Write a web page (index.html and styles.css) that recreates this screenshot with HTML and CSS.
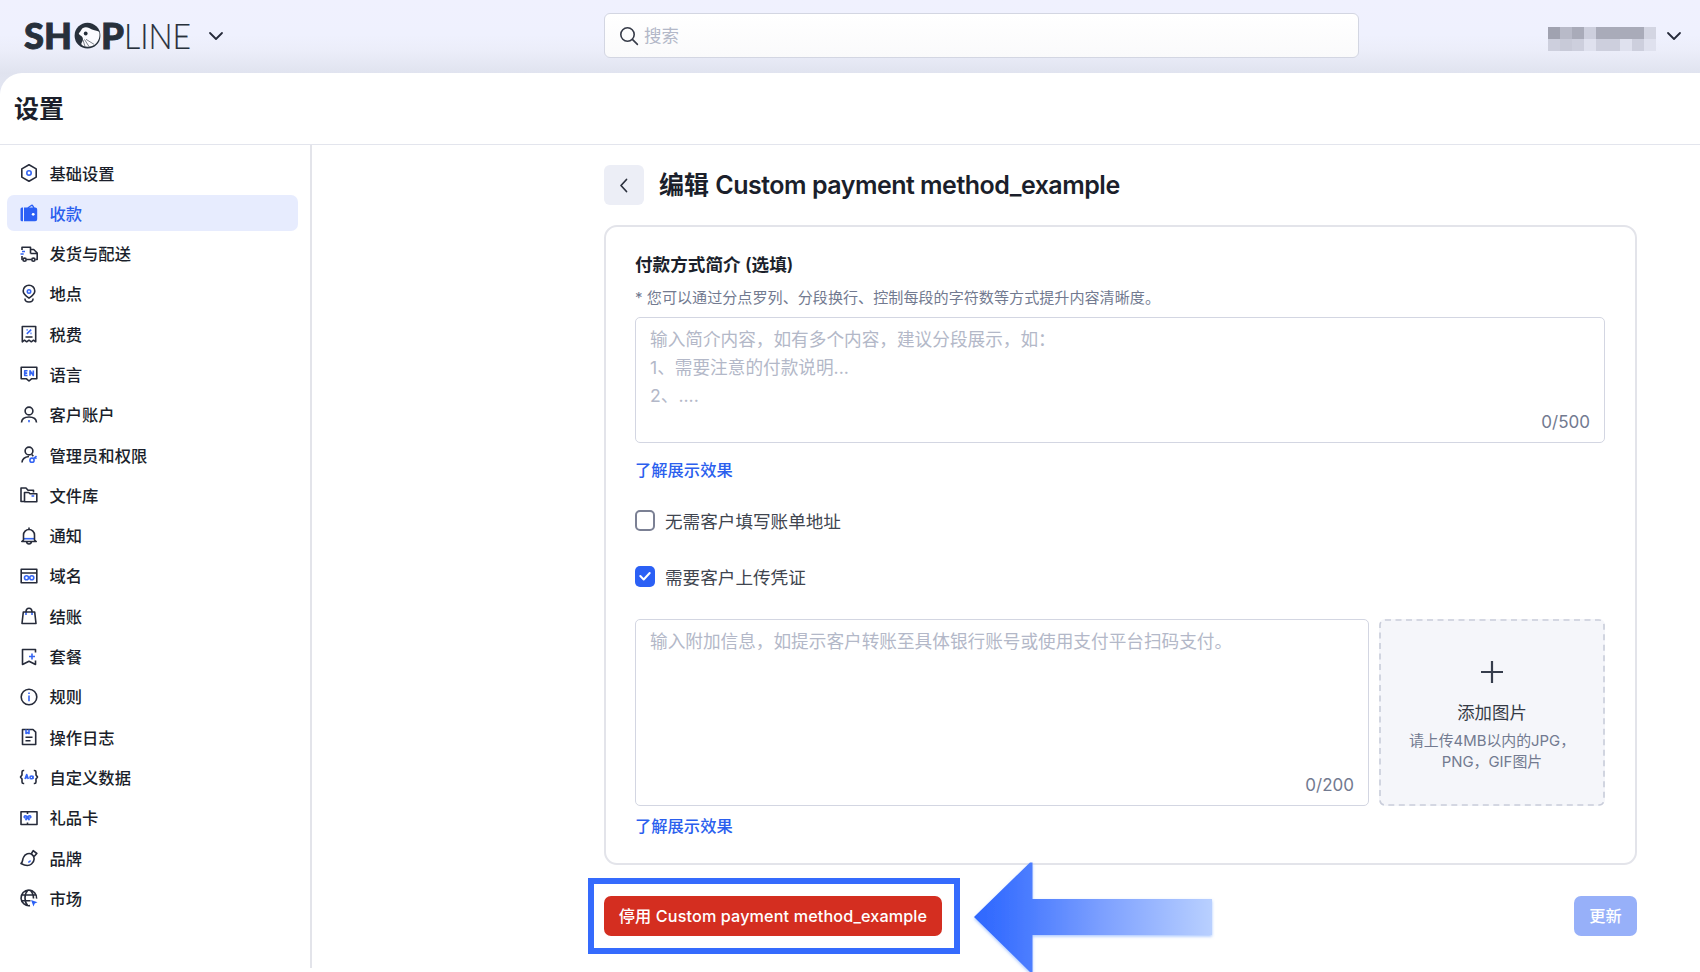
FILE: index.html
```html
<!DOCTYPE html>
<html lang="zh-CN">
<head>
<meta charset="utf-8">
<title>设置 - SHOPLINE</title>
<link rel="stylesheet" href="styles.css">
</head>
<body>
<header class="topbar">
  <div class="brand">
    <svg class="logo" width="172" height="52" viewBox="0 -10 172 52">
      <g class="logo-bold">
        <text x="0" y="29" textLength="48" lengthAdjust="spacingAndGlyphs">SH</text>
        <text x="77" y="29" textLength="23" lengthAdjust="spacingAndGlyphs">P</text>
      </g>
      <circle cx="63.500" cy="15.700" r="12.900" fill="#27303b"/>
      <path d="M58.500 8.200c4-2.200 6.500-.2 9.500 1.300 3.500 1.300 6 1.500 7.200 2.500 1 4-.2 8.500-3.200 11.500-3.500 3.200-8.500 4.200-12.500 2.500-1.800-.8-2.500-1.800-2-3 2.500-3.500 1.500-6-1-7.500-1.500-1-2-2-1.500-2.500 1.500-1.500 2-3 3.500-4.800z" fill="#fbfbff"/>
      <circle cx="61.700" cy="13.500" r="1.900" fill="#27303b"/>
      <path d="M60.500 19.500l4.500 7M62 19.300l8 5M59 20l2 6.500" stroke="#27303b" stroke-width=".6"/>
      <text class="logo-light" x="100" y="29" textLength="67" lengthAdjust="spacingAndGlyphs">LINE</text>
    </svg>
    <svg class="chevron" width="16" height="16" viewBox="0 0 16 16"><path d="M2 5l6 6 6-6"/></svg>
  </div>
  <div class="search">
    <svg width="20" height="20" viewBox="0 0 20 20"><circle cx="8.500" cy="8.500" r="6.700"/><path d="M13.400 13.400l5 5"/></svg>
    <span>搜索</span>
  </div>
  <div class="account">
    <div class="mosaic">
      <i class="g1"></i><i class="g3"></i><i class="g2"></i><i class="g5"></i><i class="g2"></i><i class="g2"></i><i class="g2"></i><i class="g2"></i><i class="g6"></i>
      <i class="g5"></i><i class="g4"></i><i class="g5"></i><i class="g7"></i><i class="g5"></i><i class="g5"></i><i class="g7"></i><i class="g5"></i><i class="g7"></i>
    </div>
    <svg class="chevron" width="16" height="16" viewBox="0 0 16 16"><path d="M2 5l6 6 6-6"/></svg>
  </div>
</header>
<div class="page">
  <div class="page-head"><h1>设置</h1></div>
  <div class="layout">
    <nav class="side">
      <a><svg class="ic" viewBox="0 0 20 20"><path d="M10 1.800l7.200 4.100v8.200L10 18.200l-7.200-4.100V5.900z"/><circle class="b" cx="10" cy="10" r="2.200"/></svg>基础设置</a>
      <a class="on"><svg class="ic" viewBox="0 0 20 20"><path class="fb" d="M1.500 6Q1.500 4.500 3 4.500h1v13.800H3q-1.500 0-1.500-1.500zM5 4.500h3.300l4-2.700q1.200-.6 2 .6l1.300 2.100h.6q2 0 2 2v9.800q0 2-2 2H5zM10 4.500h4l-1-1.500z" fill-rule="evenodd"/><circle cx="14.200" cy="11.300" r="1.400" class="w"/></svg>收款</a>
      <a><svg class="ic" viewBox="0 0 20 20"><path d="M3 6V3.200h8.500v6.300M11.500 5.500h3.200l3.500 3.500v6.500h-1.700M3 12v3.500h.8M7.500 15.500h5M11.500 9.500h6"/><circle cx="5.600" cy="15.700" r="1.600"/><circle cx="14.400" cy="15.700" r="1.600"/><path class="b" d="M3 7.500h3M1.500 10h3.200"/></svg>发货与配送</a>
      <a><svg class="ic" viewBox="0 0 20 20"><path d="M10 14.200c-3-2-5.800-4-5.800-7.200a5.800 5.800 0 0 1 11.600 0c0 3.200-2.800 5.200-5.800 7.200zM6.200 14.500c-.8 2 1 3.500 3.800 3.500s4.600-1.500 3.800-3.500"/><circle class="b" cx="10" cy="7.500" r="1.700"/></svg>地点</a>
      <a><svg class="ic" viewBox="0 0 20 20"><path d="M3.300 2.500h13.400v15.300l-2.200-1.600-2.200 1.600-2.300-1.600-2.300 1.600-2.200-1.600-2.200 1.600zM6.500 13h7"/><path class="b" d="M7.800 9.800l4.400-4.200M7.600 5.900h1M11.500 9.400h1"/></svg>税费</a>
      <a><svg class="ic" viewBox="0 0 20 20"><path d="M2.200 3.200h15.600v11.600h-5.300L10 17l-2.500-2.200H2.200z"/><path class="b" d="M8.500 6.700H5.700v4.800h2.800M5.700 9.100h2.500M11 11.700V6.700l3.300 4.800v-5"/></svg>语言</a>
      <a><svg class="ic" viewBox="0 0 20 20"><circle cx="10" cy="6" r="3.900"/><path d="M2.500 17.500c.2-4 3-5.500 7.500-5.500s7.300 1.500 7.500 5.500"/><path class="b" d="M10 15v2.300"/></svg>客户账户</a>
      <a><svg class="ic" viewBox="0 0 20 20"><circle cx="10" cy="6" r="3.900"/><path d="M3 17.500c.2-3.500 2.500-5.500 7-6M12.800 9.500l1.500 1.800"/><circle class="b" cx="13" cy="15.200" r="2.100"/><path class="b" d="M14.600 13.700l2.900-2.500M16 12.200l1.400 1.500"/></svg>管理员和权限</a>
      <a><svg class="ic" viewBox="0 0 20 20"><path d="M5 16.500H2V3h5l2 2.200h5.500v2.300M5.500 16.700V7.500h4.200l1.500 1.300h6.600v7.900z"/><path class="b" d="M12.500 11h2.700"/></svg>文件库</a>
      <a><svg class="ic" viewBox="0 0 20 20"><path class="b" d="M4.500 12.700h11"/><path d="M10 1.500v1.700M4.500 14V9a5.500 5.500 0 0 1 11 0v5l1.700 1.500H2.800zM7.500 15.700c.5 3 4.500 3 5 0"/></svg>通知</a>
      <a><svg class="ic" viewBox="0 0 20 20"><path d="M2.200 3.200h15.600v13.600H2.200zM2.200 7h15.600"/><circle class="b" cx="7.500" cy="11.800" r="2"/><circle class="b" cx="12.800" cy="11.800" r="2"/></svg>域名</a>
      <a><svg class="ic" viewBox="0 0 20 20"><path class="b" d="M7 6v3M13 6v3"/><path d="M4.300 6h11.400l1.300 11.500H3zM7 6c0-5 6-5 6 0"/></svg>结账</a>
      <a><svg class="ic" viewBox="0 0 20 20"><path d="M16.500 5.500V2.500h-13v15l6.500-3.200 6.500 3.200v-4"/><path class="b" d="M13 6.500v6M10 9.500h6"/></svg>套餐</a>
      <a><svg class="ic" viewBox="0 0 20 20"><circle cx="10" cy="10" r="7.800"/><path class="b" d="M10 8.500v5.800M10 5.500v1.500"/></svg>规则</a>
      <a><svg class="ic" viewBox="0 0 20 20"><path d="M3.500 2.500h10.500l2.700 2.600v12.400H3.500zM6.500 10.300h7M6.500 13.700h5"/><path class="b" d="M7 2.500v4l1.500-1 1.500 1v-4"/></svg>操作日志</a>
      <a><svg class="ic" viewBox="0 0 20 20"><path d="M5.200 3.500H4.500Q3 3.500 3 5v3L1.500 10 3 12v3q0 1.500 1.500 1.500h.7M14.800 3.500h.7Q17 3.500 17 5v3l1.500 2-1.500 2v3q0 1.500-1.500 1.500h-.7"/><path class="b" d="M6 12l1.700-4.500L9.300 12M6.700 10.700h2M14 8.700V12"/><circle class="b" cx="12.400" cy="10.400" r="1.400"/></svg>自定义数据</a>
      <a><svg class="ic" viewBox="0 0 20 20"><path d="M2 3.700h16v12.800H2zM8.500 4v2M8.500 14.500v2"/><path class="b" d="M8.500 9.800c-1-3-4-2-3.200-.4.500.8 2 .6 3.200.4zM8.500 9.800c1-3 4-2 3.200-.4-.5.800-2 .6-3.200.4zM8.500 9.800l-2 2.500M8.500 9.800l2 2.500"/></svg>礼品卡</a>
      <a><svg class="ic" viewBox="0 0 20 20"><path d="M2 15.500c2-1.500 1.200-3.500 2.400-6 1.600-3.800 6-5 8.600-3 3 2.300 2.800 6.800-.5 9.500-3 2.500-7 1.500-10.500-.5zM12.500 5.500l1.700-2.800 3.600 2.800-2.500 2.700"/><path class="b" d="M11.500 12.500c-.5 1-1.300 1.500-2.300 1.700"/></svg>品牌</a>
      <a><svg class="ic" viewBox="0 0 20 20"><path d="M11 17.600a7.800 7.800 0 1 1 6.600-7M2.500 7h15M2.500 12.800h9M9 2c-4 4-4 12 0 16M11 2c2.500 2.400 3.500 5 3.500 8.500"/><path class="fb" d="M12 12l6.500 2.300-2.800 1.300-1.200 2.900z"/></svg>市场</a>
    </nav>
    <main class="main">
      <div class="title-row">
        <span class="back"><svg width="18" height="18" viewBox="0 0 18 18"><path d="M11.500 3.500L6 9.500l5.500 6"/></svg></span>
        <h2>编辑 <span>Custom payment method_example</span></h2>
      </div>
      <section class="card">
        <h3>付款方式简介 (选填)</h3>
        <p class="hint">* 您可以通过分点罗列、分段换行、控制每段的字符数等方式提升内容清晰度。</p>
        <div class="area intro">
          <p>输入简介内容，如有多个内容，建议分段展示，如：<br>1、需要注意的付款说明...<br>2、....</p>
          <span class="count">0/500</span>
        </div>
        <a class="link link-intro">了解展示效果</a>
        <div class="check"><span class="box"></span>无需客户填写账单地址</div>
        <div class="check"><span class="box ticked"><svg width="20" height="20" viewBox="0 0 20 20"><path d="M5.300 10l3.400 3.500 6-6.500"/></svg></span>需要客户上传凭证</div>
        <div class="proof">
          <div class="area extra">
            <p>输入附加信息，如提示客户转账至具体银行账号或使用支付平台扫码支付。</p>
            <span class="count">0/200</span>
          </div>
          <div class="upload">
            <svg class="dash" width="226" height="187"><rect x="1" y="1" width="224" height="185" rx="5"/></svg>
            <svg class="plus" width="22" height="22" viewBox="0 0 22 22"><path d="M11 0v22M0 11h22"/></svg>
            <b>添加图片</b>
            <small>请上传4MB以内的JPG，<br>PNG，GIF图片</small>
          </div>
        </div>
        <a class="link link-extra">了解展示效果</a>
      </section>
      <div class="actions">
        <div class="danger-wrap">
          <span class="btn danger">停用 Custom payment method_example</span>
          <span class="marker"></span>
        </div>
        <span class="btn update">更新</span>
      </div>
    </main>
  </div>
</div>
<svg class="arrow" width="250" height="112" viewBox="0 0 250 112">
  <defs>
    <linearGradient id="fade" x1="0" x2="1"><stop offset="0" stop-color="#2e67fe"/><stop offset=".12" stop-color="#3a70ff"/><stop offset=".55" stop-color="#7ea1ff"/><stop offset="1" stop-color="#b9d0ff"/></linearGradient>
    <filter id="soft" x="-5%" y="-5%" width="110%" height="115%"><feDropShadow dx="0" dy="1.500" stdDeviation="1.500" flood-color="#5f96ff" flood-opacity=".55"/></filter>
  </defs>
  <path filter="url(#soft)" d="M4 57L60 2.500h2.500V39H242v36H62.500v37H60z" fill="url(#fade)"/>
</svg>
</body>
</html>
```
FILE: styles.css
```css
* { box-sizing: border-box; }
body {
  margin: 0;
  width: 1700px;
  height: 972px;
  overflow: hidden;
  position: relative;
  background: linear-gradient(#f0f1fe 0, #eff1fe 35px, #ebedf9 52px, #e0e3ef 73px, #e3e6f2 90px);
  font-family: Inter, "Noto Sans CJK SC", sans-serif;
  color: #1b1f2b;
}
h1, h2, h3, p { margin: 0; }
svg { display: block; flex: none; fill: none; }

.topbar { height: 73px; display: grid; grid-template-columns: 604px 755px 1fr; align-items: center; padding-bottom: 2px; }
.brand { display: flex; align-items: center; gap: 12px; padding-left: 24px; }
.logo { overflow: visible; }
.logo text { font-family: Lato, "Open Sans", sans-serif; font-size: 36px; fill: #27303b; }
.logo-bold text { font-weight: 900; stroke: #27303b; stroke-width: .9; }
.logo .logo-light { font-weight: 300; stroke: #27303b; stroke-width: .2; }
.chevron path { stroke: #262b3a; stroke-width: 1.8; stroke-linecap: round; stroke-linejoin: round; }
.search {
  height: 45px;
  border: 1px solid #d3d6e2;
  border-radius: 6px;
  background: linear-gradient(#fff, #fafafb);
  display: flex;
  align-items: center;
  gap: 5px;
  padding-left: 14px;
  font-size: 17.5px;
  line-height: 26px;
  color: #b3b8c8;
}
.search svg { stroke: #363b48; stroke-width: 1.6; stroke-linecap: round; }
.account { display: flex; align-items: center; justify-content: flex-end; gap: 10px; padding-right: 18px; }
.mosaic { display: grid; grid-template-columns: repeat(9, 12px); grid-auto-rows: 12px; margin-top: 7px; }
.g1 { background: #a0a2b0; }
.g2 { background: #a9abb9; }
.g3 { background: #b8bac8; }
.g4 { background: #c8cad8; }
.g5 { background: #cdcfdd; }
.g6 { background: #d3d5e2; }
.g7 { background: #dfe1ee; }

.page { height: 899px; background: #fff; border-top-left-radius: 22px; }
.page-head { height: 72px; padding: 0 14px; display: flex; align-items: center; border-bottom: 1px solid #e3e5ed; }
h1 { font-size: 25px; font-weight: 600; line-height: 36px; }
.layout { display: flex; }
.side {
  width: 312px;
  height: 823px;
  border-right: 2px solid #e3e4ea;
  padding: 10px 12px 0 7px;
  display: grid;
  grid-auto-rows: 36px;
  align-content: start;
  row-gap: 4.3px;
}
.side a { display: flex; align-items: center; gap: 10.5px; padding: 0 0 1px 12px; border-radius: 7px; font-size: 16.3px; font-weight: 500; }
.side .on { background: #e7ecfe; color: #2b5fee; }
.ic { width: 20px; height: 20px; margin-top: 1px; stroke: #262b3a; stroke-width: 1.6; stroke-linejoin: round; }
.ic .b { stroke: #3565f2; }
.ic .fb { fill: #2b60f5; stroke: none; }
.ic .w { fill: #fff; stroke: none; }

.main { width: 1033px; margin-left: 292px; padding-top: 20px; }
.title-row { display: flex; align-items: center; gap: 15px; height: 40px; }
.back { width: 40px; height: 40px; border-radius: 6px; background: #eceef6; display: grid; place-items: center; }
.back path { stroke: #2b303d; stroke-width: 1.7; stroke-linecap: round; stroke-linejoin: round; }
h2 { font-size: 25px; font-weight: 600; line-height: 40px; white-space: nowrap; }
h2 span { letter-spacing: -.5px; }
.card { height: 640px; margin-top: 20px; border: 2px solid #e3e4ea; border-radius: 13px; padding: 22px 29px 0; }
h3 { font-size: 17.6px; font-weight: 600; line-height: 32px; }
.hint { font-size: 15.1px; line-height: 24px; margin-top: 5px; color: #727a90; }
.area { position: relative; border: 1px solid #d3d6e2; border-radius: 5px; padding: 8px 14px; font-size: 17.65px; line-height: 28px; color: #b3b8c8; }
.intro { width: 970px; height: 126px; margin-top: 7px; }
.count { position: absolute; right: 14px; bottom: 6px; font-size: 17px; color: #727a90; }
.link { display: block; width: max-content; font-size: 16.3px; font-weight: 500; line-height: 24px; color: #2b5fee; }
.link-intro { margin: 15px 0 25px; }
.check { display: flex; align-items: center; gap: 10px; height: 26px; margin-bottom: 30px; font-size: 17.6px; color: #40454f; }
.box { width: 20px; height: 21px; border: 2px solid #7b8094; border-radius: 5px; }
.ticked { border: 0; background: #2b60f5; }
.ticked path { stroke: #fff; stroke-width: 2; stroke-linecap: round; stroke-linejoin: round; }
.proof { display: flex; gap: 10px; height: 187px; }
.extra { width: 734px; }
.upload { position: relative; width: 226px; display: flex; flex-direction: column; align-items: center; padding-top: 42px; background: #f5f6fa; border-radius: 6px; }
.dash { position: absolute; inset: 0; }
.dash rect { stroke: #c9cdda; stroke-width: 1.6; stroke-dasharray: 6 4.5; }
.plus path { stroke: #363d4c; stroke-width: 2.2; }
.upload b { font-size: 17.4px; font-weight: 400; line-height: 26px; margin-top: 17px; color: #363b46; }
.upload small { font-size: 14.9px; line-height: 20.5px; margin-top: 5px; text-align: center; color: #727a90; white-space: nowrap; }
.link-extra { margin-top: 8px; }
.actions { display: flex; justify-content: space-between; margin-top: 31px; }
.danger-wrap { position: relative; }
.btn { display: grid; place-items: center; height: 40px; padding-bottom: 2px; border-radius: 7px; font-size: 16.2px; font-weight: 500; color: #fff; white-space: nowrap; }
.danger { width: 338px; background: #d42e20; letter-spacing: .12px; }
.update { width: 63px; background: #97b0f9; }
.marker { position: absolute; inset: -18px -18px -18px -16px; border: 6px solid #356bfd; }
.arrow { position: absolute; left: 970px; top: 860px; }
```
